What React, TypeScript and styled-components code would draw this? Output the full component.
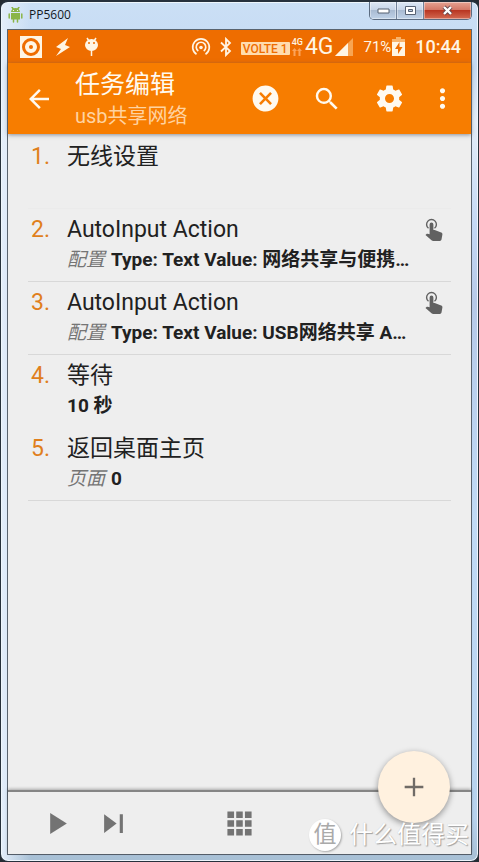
import React from "react";
import styled, { createGlobalStyle } from "styled-components";

const GlobalStyle = createGlobalStyle`
  *, *::before, *::after { box-sizing: border-box; }
  html, body { margin: 0; padding: 0; }
  body { background: #252c33; font-family: Roboto, "Noto Sans CJK SC", sans-serif; }
  button { margin: 0; padding: 0; border: 0; background: none; color: inherit; font: inherit; cursor: pointer; }
  svg { display: block; flex: none; }
  h1, h2, p { margin: 0; font-weight: 400; }
`;

const Frame = styled.div`
  display: flex;
  flex-direction: column;
  min-height: 100vh;
  padding: 0 6px 6px;
  border: 1px solid #27313c;
  border-top-width: 2px;
  border-radius: 8px;
  background:
    linear-gradient(90deg, #e4eefa 0, transparent 30px),
    linear-gradient(180deg, #cbdff5 0, #c4daf3 60px, #e4edf8 120px, #c5d9f5 220px, #b6c9e8 300px, #c0daf6 60%, #b7d2ee 95%, #a7bfd4 100%);
  box-shadow: inset 0 0 0 1px #eef6fc;
`;

const TitleBar = styled.header`
  display: flex;
  align-items: flex-start;
  height: 27px;
  flex: none;
`;

const WindowTitle = styled.h1`
  display: flex;
  align-items: center;
  gap: 6px;
  flex: 1;
  height: 26px;
  padding-left: 1px;
  color: #14191f;
  font: 12px/16px "Open Sans", "Noto Sans", sans-serif;
`;

const WindowButtons = styled.div`
  display: flex;
  overflow: hidden;
  border: 1px solid #5b6b80;
  border-top: 0;
  border-radius: 0 0 5px 5px;
`;

const WindowButton = styled.button<{ $close?: boolean }>`
  display: grid;
  place-items: center;
  width: ${(p) => (p.$close ? 47 : 27)}px;
  height: 17px;
  border-right: ${(p) => (p.$close ? 0 : 1)}px solid #71829a;
  background: ${(p) =>
    p.$close
      ? "linear-gradient(#e5a292, #d37867 45%, #b93622 50%, #d46a52)"
      : "linear-gradient(#dde8f5, #c7d5e8 45%, #a9bbd2 50%, #bfd2e8)"};
  box-shadow: inset 0 0 0 1px rgba(255, 255, 255, 0.4);
`;

const Screen = styled.div`
  position: relative;
  display: flex;
  flex: 1;
  flex-direction: column;
  border: 1px solid #59636e;
  background: #eeeeee;
`;

const StatusBar = styled.div`
  display: flex;
  align-items: center;
  justify-content: space-between;
  height: 33px;
  padding: 0 10px 0 12px;
  background: #ee6d00;
  color: #fff5e4;
`;

const StatusGroup = styled.div<{ $gap: number }>`
  display: flex;
  align-items: center;
  gap: ${(p) => p.$gap}px;
`;

const VolteBadge = styled.span`
  height: 13px;
  margin-top: 4px;
  padding: 0 2px;
  border-radius: 1px;
  background: #ffdcae;
  color: #ee6d00;
  font: 500 12px/14px Roboto, sans-serif;
`;

const SimStack = styled.span`
  display: flex;
  flex-direction: column;
  align-items: center;
  gap: 1px;
  font: 500 9px/9px Roboto, sans-serif;
`;

const StatusText = styled.span<{ $size: number; $medium?: boolean }>`
  font-size: ${(p) => p.$size}px;
  line-height: 24px;
  font-weight: ${(p) => (p.$medium ? 500 : 400)};
`;

const AppBar = styled.header`
  position: relative;
  display: flex;
  align-items: center;
  height: 71px;
  padding: 0 16px;
  background: #f77d00;
  color: #fffaf0;
  box-shadow: 0 1px 4px rgba(70, 80, 95, 0.6);
`;

const IconButton = styled.button`
  display: grid;
  place-items: center;
  width: 28px;
  height: 40px;
`;

const Heading = styled.div`
  flex: 1;
  min-width: 0;
  margin-left: 23px;
  white-space: nowrap;
`;

const Title = styled.h2`
  font-size: 25px;
  line-height: 34px;
`;

const Subtitle = styled.p`
  color: #ffd3a0;
  font-size: 20px;
  line-height: 28px;
`;

const Actions = styled.div`
  display: flex;
  gap: 34px;
`;

const MoreButton = styled(IconButton)`
  margin-left: 25px;
`;

const TaskList = styled.ol`
  flex: 1;
  margin: 0;
  padding: 2px 20px 0 20px;
  list-style: none;
`;

const TaskRow = styled.li<{ $divider: string }>`
  display: grid;
  grid-template-columns: 39px minmax(0, 1fr) 30px;
  min-height: 73px;
  padding-top: 6px;
  border-bottom: 1px solid ${(p) => p.$divider};
`;

const TaskNumber = styled.span`
  padding-left: 3px;
  color: #e07f1c;
  font-size: 23px;
  line-height: 30px;
`;

const TaskBody = styled.div`
  color: #212121;
  white-space: nowrap;
`;

const TaskName = styled.p`
  font-size: 23px;
  line-height: 30px;
`;

const TaskDetail = styled.p`
  font-size: 19px;
  font-weight: 700;
  line-height: 29px;
`;

const DetailLabel = styled.em`
  margin-right: 6px;
  color: #757575;
  font-weight: 400;
`;

const TouchSlot = styled.span`
  padding: 3px 0 0 3px;
  color: #616161;
`;

const BottomBar = styled.nav`
  position: relative;
  display: grid;
  grid-template-columns: 1fr auto 1fr;
  align-items: center;
  height: 64px;
  padding-left: 36px;
  border-top: 2px solid #858585;
  color: #737373;
  box-shadow: 0 -1px 3px rgba(0, 0, 0, 0.3);
`;

const PlayControls = styled.div`
  display: flex;
  gap: 27px;
`;

const GridButton = styled(IconButton)`
  margin-right: 37px;
`;

const AddButton = styled.button`
  position: absolute;
  right: 21px;
  bottom: 31px;
  display: grid;
  place-items: center;
  width: 72px;
  height: 72px;
  border-radius: 50%;
  background: #fff1df;
  color: #706b66;
  box-shadow: 0 2px 6px rgba(0, 0, 0, 0.4);
`;

const Watermark = styled.div`
  position: absolute;
  right: 2px;
  bottom: 3px;
  display: flex;
  align-items: center;
  gap: 8px;
  color: #ffffff;
  font-size: 24px;
  line-height: 32px;
  text-shadow: 1px 1px 1px #a0a0a0, 0 0 1px #c0c0c0;
  pointer-events: none;
`;

const WatermarkBadge = styled.span`
  display: grid;
  place-items: center;
  width: 32px;
  height: 32px;
  border-radius: 50%;
  background: #ffffff;
  box-shadow: 1px 1px 2px #aaaaaa;
  color: #aaaaaa;
  font-size: 23px;
  text-shadow: none;
`;

type GlyphProps = { d: string; size: number };

const Glyph = ({ d, size }: GlyphProps) => (
  <svg width={size} height={size} viewBox="0 0 24 24" fill="currentColor" aria-hidden="true">
    <path d={d} />
  </svg>
);

const paths = {
  back: "M20 11H7.83l5.59-5.59L12 4l-8 8 8 8 1.41-1.41L7.83 13H20v-2z",
  cancel:
    "M12 2C6.47 2 2 6.47 2 12s4.47 10 10 10 10-4.47 10-10S17.53 2 12 2zm5 13.59L15.59 17 12 13.41 8.41 17 7 15.59 10.59 12 7 8.41 8.41 7 12 10.59 15.59 7 17 8.41 13.41 12 17 15.59z",
  search:
    "M15.5 14h-.79l-.28-.27A6.471 6.471 0 0 0 16 9.5 6.5 6.5 0 1 0 9.5 16c1.61 0 3.09-.59 4.23-1.57l.27.28v.79l5 4.99L20.49 19l-4.99-5zm-6 0C7.01 14 5 11.99 5 9.5S7.01 5 9.5 5 14 7.01 14 9.5 11.99 14 9.5 14z",
  settings:
    "M19.43 12.98c.04-.32.07-.64.07-.98s-.03-.66-.07-.98l2.11-1.65c.19-.15.24-.42.12-.64l-2-3.46c-.12-.22-.39-.3-.61-.22l-2.49 1c-.52-.4-1.08-.73-1.69-.98l-.38-2.65C14.46 2.18 14.25 2 14 2h-4c-.25 0-.46.18-.49.42l-.38 2.65c-.61.25-1.17.59-1.69.98l-2.49-1c-.23-.09-.49 0-.61.22l-2 3.46c-.13.22-.07.49.12.64l2.11 1.65c-.04.32-.07.65-.07.98s.03.66.07.98l-2.11 1.65c-.19.15-.24.42-.12.64l2 3.46c.12.22.39.3.61.22l2.49-1c.52.4 1.08.73 1.69.98l.38 2.65c.03.24.24.42.49.42h4c.25 0 .46-.18.49-.42l.38-2.65c.61-.25 1.17-.59 1.69-.98l2.49 1c.23.09.49 0 .61-.22l2-3.46c.12-.22.07-.49-.12-.64l-2.11-1.65zM12 15.5c-1.93 0-3.5-1.57-3.5-3.5s1.57-3.5 3.5-3.5 3.5 1.57 3.5 3.5-1.57 3.5-3.5 3.5z",
  more: "M12 8c1.1 0 2-.9 2-2s-.9-2-2-2-2 .9-2 2 .9 2 2 2zm0 2c-1.1 0-2 .9-2 2s.9 2 2 2 2-.9 2-2-.9-2-2-2zm0 6c-1.1 0-2 .9-2 2s.9 2 2 2 2-.9 2-2-.9-2-2-2z",
  play: "M4 2v20l16-10z",
  skip: "M3 3v18l12-9zM18 3h3v18h-3z",
  apps: "M2 2h5.5v5.5H2zM9.3 2h5.4v5.5H9.3zM16.5 2H22v5.5h-5.5zM2 9.3h5.5v5.4H2zM9.3 9.3h5.4v5.4H9.3zM16.5 9.3H22v5.4h-5.5zM2 16.5h5.5V22H2zM9.3 16.5h5.4V22H9.3zM16.5 16.5H22V22h-5.5z",
  add: "M20 13h-7v7h-2v-7H4v-2h7V4h2v7h7v2z",
};

const TouchIcon = () => (
  <svg width="20" height="24" viewBox="0 0 20 24" fill="currentColor" aria-hidden="true">
    <path d="M4.500 10.300A4.900 4.900 0 1 1 10.500 10.300" fill="none" stroke="currentColor" strokeWidth="1.400" />
    <path d="M5.600 6.500a1.900 1.900 0 0 1 3.800 0V12h1.300l6.500 2.600c.9.400 1.300 1 1.200 2l-.9 5c-.2.900-.8 1.400-1.700 1.400H9.200c-.6 0-1-.2-1.400-.5L1.500 17l1-1c.3-.3.700-.4 1.100-.3l2 .500z" />
  </svg>
);

const BluetoothIcon = () => (
  <svg width="14" height="20" viewBox="0 0 14 20" fill="none" stroke="currentColor" strokeWidth="1.800" aria-hidden="true">
    <path d="M2 5.500l9 8.500-4 4V2l4 4-9 8.500" />
  </svg>
);

const RobotIcon = () => (
  <svg width="15" height="16" viewBox="0 0 15 16" fill="#8ab547" aria-hidden="true">
    <path d="M3 5a4.500 4 0 0 1 9 0zM3 6h9v6.500H3z" />
    <path d="M4 0l1.500 2.500M11 0L9.500 2.500M1.200 7v4M13.800 7v4M5.500 12v3M9.500 12v3" stroke="#8ab547" strokeWidth="1.500" strokeLinecap="round" />
    <circle cx="5.500" cy="3.500" r=".6" fill="#fff" />
    <circle cx="9.500" cy="3.500" r=".6" fill="#fff" />
  </svg>
);

const DiscIcon = () => (
  <svg width="22" height="22" viewBox="0 0 22 22" aria-hidden="true">
    <path d="M0 0h22v22H0z" fill="#fff5e4" />
    <circle cx="11" cy="11" r="7.500" fill="none" stroke="#ee6d00" strokeWidth="3" />
    <circle cx="11" cy="11" r="2" fill="#ee6d00" />
  </svg>
);

const BoltIcon = () => (
  <svg width="16" height="20" viewBox="0 0 16 20" fill="currentColor" aria-hidden="true">
    <path d="M13 1L1 10l5 2L1 19l14-9-5-2z" />
  </svg>
);

const BugIcon = () => (
  <svg width="15" height="20" viewBox="0 0 15 20" aria-hidden="true">
    <path d="M3 1l2 3M12 1l-2 3M7.500 13v6" stroke="currentColor" strokeWidth="1.500" />
    <ellipse cx="7.500" cy="8" rx="6.500" ry="6" fill="currentColor" />
    <circle cx="5" cy="6" r="1" fill="#ee6d00" />
    <circle cx="10" cy="6" r="1" fill="#ee6d00" />
  </svg>
);

const HotspotIcon = () => (
  <svg width="20" height="20" viewBox="0 0 20 20" fill="none" stroke="currentColor" strokeWidth="1.700" aria-hidden="true">
    <path d="M5.500 17.200a8.300 8.300 0 1 1 9 0M7.300 14a4.800 4.800 0 1 1 5.400 0" />
    <circle cx="10" cy="10.500" r="1.800" fill="currentColor" stroke="none" />
  </svg>
);

const DataArrows = () => (
  <svg width="10" height="8" viewBox="0 0 10 8" fill="#fba35a" aria-hidden="true">
    <path d="M2.500 0L5 3H3.500v5h-2V3H0zM7.500 0L10 3H8.500v5h-2V3H5z" />
  </svg>
);

const SignalIcon = () => (
  <svg width="18" height="18" viewBox="0 0 18 18" aria-hidden="true">
    <path d="M18 0v18H0z" fill="#f8a553" />
    <path d="M13 5v13H0z" fill="currentColor" />
  </svg>
);

const BatteryIcon = () => (
  <svg width="13" height="19" viewBox="0 0 13 19" aria-hidden="true">
    <path d="M4 0h5v2h4v4H0V2h4z" fill="#f8b36b" />
    <path d="M0 5h13v14H0z" fill="currentColor" />
    <path d="M7.500 5L3 12h3v5l4.500-7h-3z" fill="#ee6d00" />
  </svg>
);

const MinimizeIcon = () => (
  <svg width="13" height="6" viewBox="0 0 13 6" aria-hidden="true">
    <path d="M1 1h11v4H1z" fill="#fff" stroke="#576273" />
  </svg>
);

const MaximizeIcon = () => (
  <svg width="13" height="11" viewBox="0 0 13 11" aria-hidden="true">
    <path d="M1.500 1.500h10v8h-10z" fill="#fff" stroke="#576273" />
    <path d="M4.500 4.500h4v2h-4z" fill="#b8c8dc" stroke="#576273" />
  </svg>
);

const CloseIcon = () => (
  <svg width="13" height="11" viewBox="0 0 13 11" aria-hidden="true">
    <path d="M3 2l7 7M10 2L3 9" stroke="#65454b" strokeWidth="4" />
    <path d="M3 2l7 7M10 2L3 9" stroke="#fff" strokeWidth="2.400" />
  </svg>
);

type Task = { name: string; label?: string; detail?: string; touch?: boolean; divider: string };

const tasks: Task[] = [
  { name: "无线设置", divider: "#ebebeb" },
  { name: "AutoInput Action", label: "配置", detail: "Type: Text Value: 网络共享与便携…", touch: true, divider: "#d8d8d8" },
  { name: "AutoInput Action", label: "配置", detail: "Type: Text Value: USB网络共享 A…", touch: true, divider: "#d8d8d8" },
  { name: "等待", detail: "10 秒", divider: "#eeeeee" },
  { name: "返回桌面主页", label: "页面", detail: "0", divider: "#d8d8d8" },
];

export default function App() {
  return (
    <>
      <GlobalStyle />
      <Frame>
        <TitleBar>
          <WindowTitle>
            <RobotIcon />
            PP5600
          </WindowTitle>
          <WindowButtons>
            <WindowButton aria-label="Minimize"><MinimizeIcon /></WindowButton>
            <WindowButton aria-label="Maximize"><MaximizeIcon /></WindowButton>
            <WindowButton $close aria-label="Close"><CloseIcon /></WindowButton>
          </WindowButtons>
        </TitleBar>
        <Screen>
          <StatusBar>
            <StatusGroup $gap={13}>
              <DiscIcon />
              <BoltIcon />
              <BugIcon />
            </StatusGroup>
            <StatusGroup $gap={10}>
              <StatusGroup $gap={8}>
                <HotspotIcon />
                <BluetoothIcon />
                <StatusGroup $gap={2}>
                  <VolteBadge>VOLTE 1</VolteBadge>
                  <SimStack>4G<DataArrows /></SimStack>
                  <StatusText $size={23}>4G</StatusText>
                  <SignalIcon />
                </StatusGroup>
              </StatusGroup>
              <StatusGroup $gap={1}>
                <StatusText $size={15}>71%</StatusText>
                <BatteryIcon />
              </StatusGroup>
              <StatusText $size={18} $medium>10:44</StatusText>
            </StatusGroup>
          </StatusBar>
          <AppBar>
            <IconButton aria-label="Back"><Glyph d={paths.back} size={30} /></IconButton>
            <Heading>
              <Title>任务编辑</Title>
              <Subtitle>usb共享网络</Subtitle>
            </Heading>
            <Actions>
              <IconButton aria-label="Cancel"><Glyph d={paths.cancel} size={31} /></IconButton>
              <IconButton aria-label="Search"><Glyph d={paths.search} size={30} /></IconButton>
              <IconButton aria-label="Settings"><Glyph d={paths.settings} size={31} /></IconButton>
            </Actions>
            <MoreButton aria-label="More"><Glyph d={paths.more} size={31} /></MoreButton>
          </AppBar>
          <TaskList>
            {tasks.map((task, i) => (
              <TaskRow key={i} $divider={task.divider}>
                <TaskNumber>{i + 1}.</TaskNumber>
                <TaskBody>
                  <TaskName>{task.name}</TaskName>
                  {task.detail && (
                    <TaskDetail>
                      {task.label && <DetailLabel>{task.label}</DetailLabel>}
                      {task.detail}
                    </TaskDetail>
                  )}
                </TaskBody>
                {task.touch && <TouchSlot><TouchIcon /></TouchSlot>}
              </TaskRow>
            ))}
          </TaskList>
          <BottomBar>
            <PlayControls>
              <IconButton aria-label="Play"><Glyph d={paths.play} size={25} /></IconButton>
              <IconButton aria-label="Step"><Glyph d={paths.skip} size={25} /></IconButton>
            </PlayControls>
            <GridButton aria-label="Actions"><Glyph d={paths.apps} size={29} /></GridButton>
          </BottomBar>
          <AddButton aria-label="Add"><Glyph d={paths.add} size={28} /></AddButton>
          <Watermark>
            <WatermarkBadge>值</WatermarkBadge>
            什么值得买
          </Watermark>
        </Screen>
      </Frame>
    </>
  );
}
